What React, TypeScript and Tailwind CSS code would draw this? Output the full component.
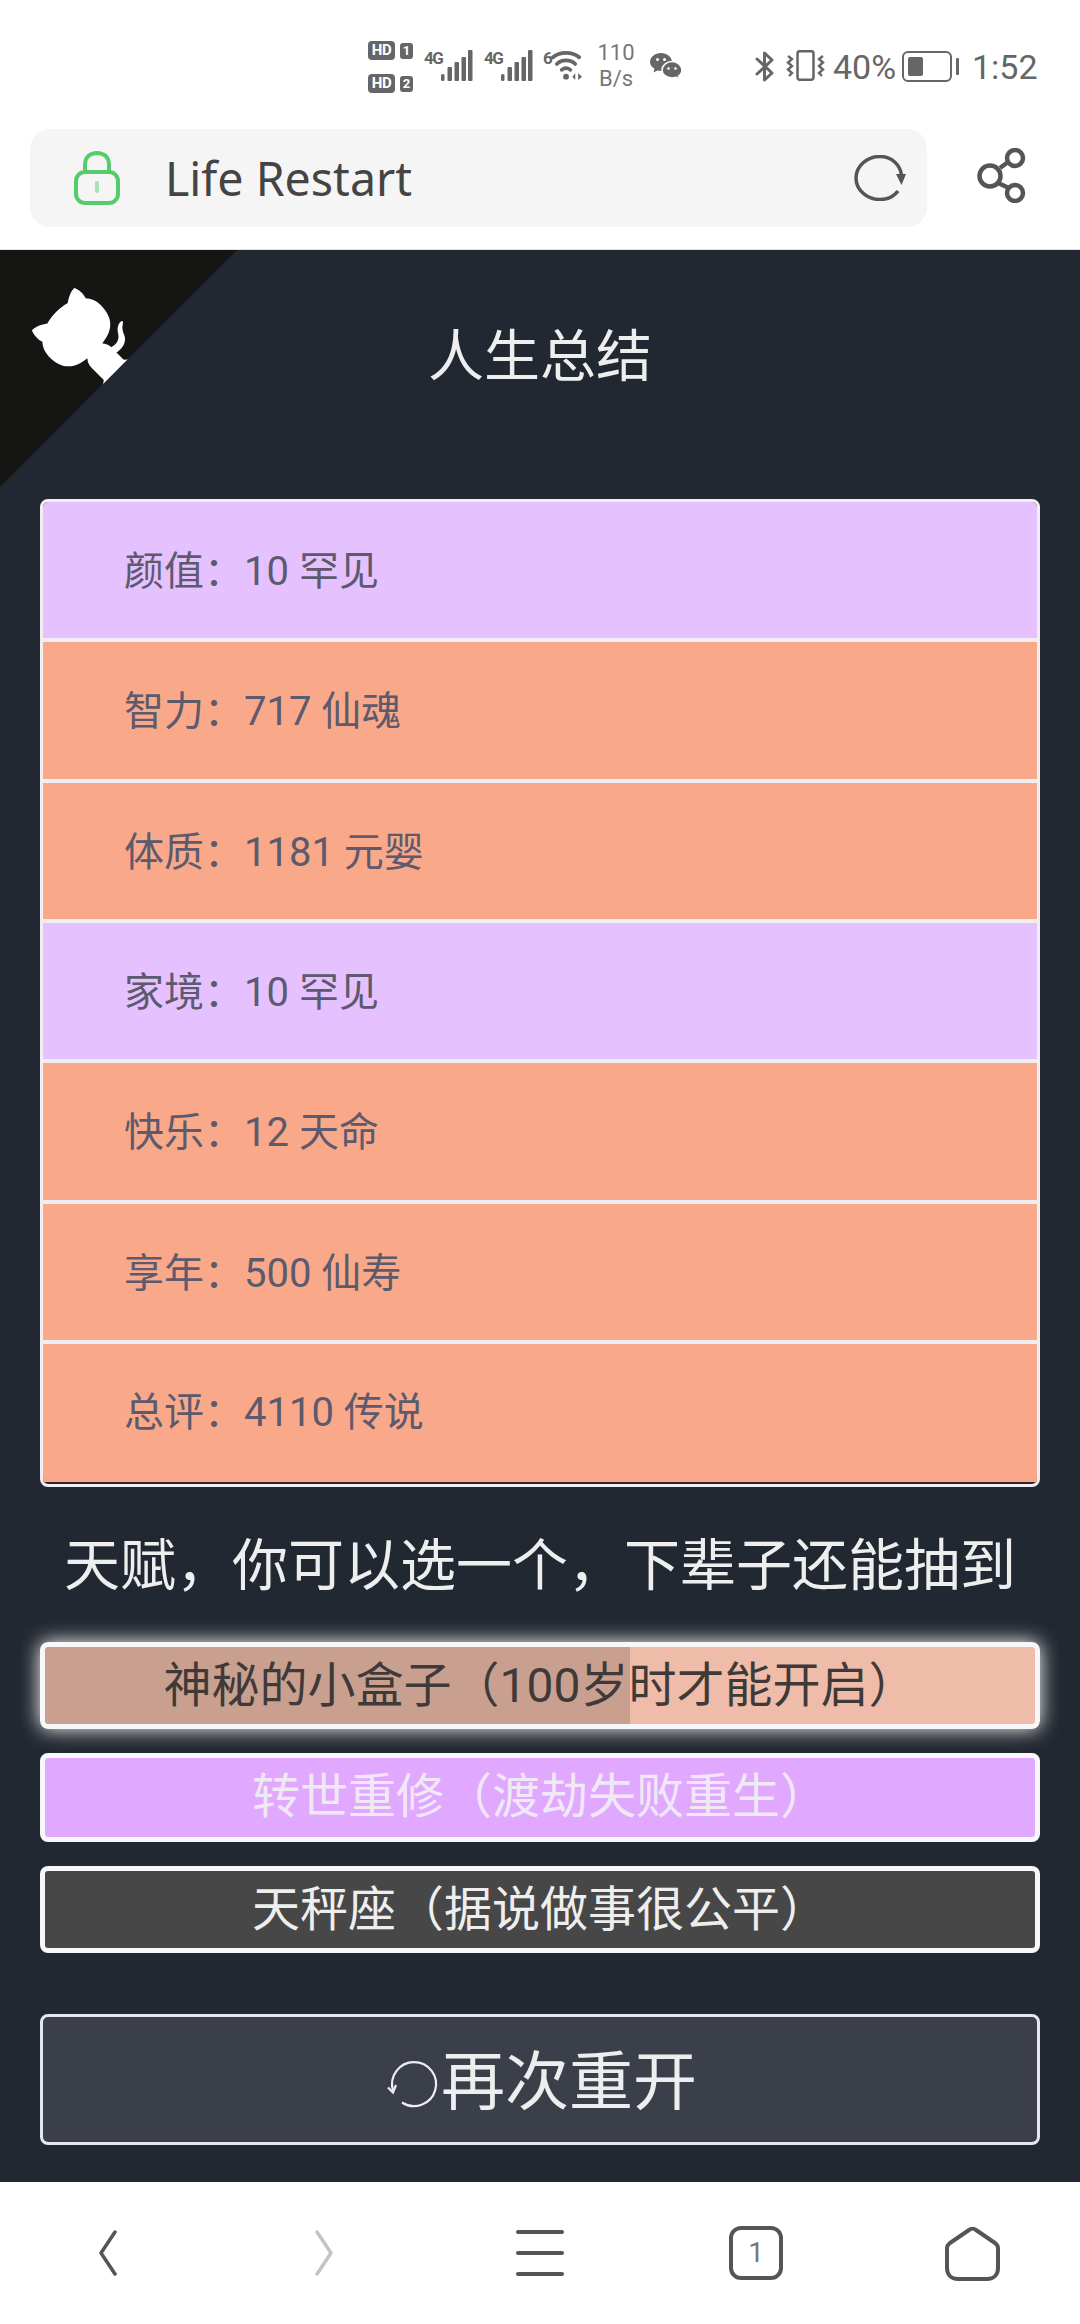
import React from "react";

const cjk = "font-['Roboto','Noto_Sans_CJK_SC',sans-serif]";

function Hd({ n }: { n: string }) {
  return (
    <div className="flex items-center gap-[5px] h-[19px]">
      <span className="w-[27px] h-[19px] rounded-[4px] bg-[#666666] text-white text-[15px] leading-[19px] font-bold text-center tracking-[-0.5px] font-['Roboto',sans-serif]">HD</span>
      <span className="w-[13px] h-[16px] rounded-[3px] bg-[#666666] text-white text-[13px] leading-[16px] font-bold text-center font-['Roboto',sans-serif]">{n}</span>
    </div>
  );
}

function Signal({ label }: { label: string }) {
  return (
    <div className="flex items-start h-[32px] w-[49px]">
      <span className="text-[#666666] text-[17px] leading-[15px] font-bold mt-[1px] w-[17px] tracking-[-1.5px] font-['Roboto',sans-serif]">{label}</span>
      <svg width="32" height="32" viewBox="0 0 32 32" fill="#666666">
        <rect x="0" y="24" width="3.500" height="7" rx="1.500" />
        <rect x="6.500" y="17" width="4.500" height="14" rx="1" />
        <rect x="13.500" y="12" width="4.500" height="19" rx="1" />
        <rect x="20.500" y="7" width="4.500" height="24" rx="1" />
        <rect x="27" y="0" width="4.500" height="31" rx="1" />
      </svg>
    </div>
  );
}

function Wifi() {
  return (
    <div className="flex items-start h-[32px] w-[41px]">
      <span className="text-[#666666] text-[17px] leading-[15px] font-bold mt-[1px] w-[8px] font-['Roboto',sans-serif]">6</span>
      <svg width="34" height="32" viewBox="0 0 34 32" fill="none" stroke="#666666" strokeWidth="3.800" strokeLinecap="round">
        <path d="M2 7 C9 1 22 1 29 7" />
        <path d="M6 14 C11 9 20 9 25 14" />
        <path d="M11 20 C14 17.500 17 17.500 20 20" />
        <circle cx="15.500" cy="27" r="3" fill="#666666" stroke="none" />
        <path d="M25 23.500 L25 30.500 L22 27 Z M28 23.500 L28 30.500 L32 27 Z" fill="#666666" stroke="none" />
      </svg>
    </div>
  );
}

function Wechat() {
  return (
    <svg width="32" height="26" viewBox="0 0 32 26" fill="#666666">
      <path d="M11 0 C17 0 22 4 22 9 C22 14 17 18 11 18 C9.500 18 8.500 17.800 7.500 17.500 L3.500 19.500 L4.500 15.800 C1.700 14 0 11.600 0 9 C0 4 5 0 11 0 Z" />
      <path d="M22 8.500 C27.500 8.500 32 12.500 32 17 C32 19.500 30.600 21.700 28.500 23.100 L29.300 26 L26 24.300 C24.800 24.700 23.400 25 22 25 C16.500 25 12 21.500 12 17 C12 12.500 16.500 8.500 22 8.500 Z" stroke="#ffffff" strokeWidth="1.500" />
      <circle cx="7.500" cy="6.500" r="1.500" fill="#fff" />
      <circle cx="14.500" cy="6.500" r="1.500" fill="#fff" />
      <circle cx="18.500" cy="15.500" r="1.300" fill="#fff" />
      <circle cx="25.500" cy="15.500" r="1.300" fill="#fff" />
    </svg>
  );
}

function Bluetooth() {
  return (
    <svg width="20" height="31" viewBox="0 0 20 31" fill="none" stroke="#666666" strokeWidth="3" strokeLinejoin="round" strokeLinecap="round">
      <path d="M2 8 L17 22 L9.500 29 L9.500 2 L17 9 L2 23" />
    </svg>
  );
}

function Vibrate() {
  return (
    <svg width="40" height="31" viewBox="0 0 40 31" fill="none" stroke="#666666" strokeWidth="2.500">
      <rect x="11.500" y="1.200" width="16" height="28.600" rx="2.500" />
      <path d="M2 6 L6 9 L2 12.500 L6 16 L2 19.500 L6 23 L3 26" strokeWidth="2.400" />
      <path d="M37 6 L33 9 L37 12.500 L33 16 L37 19.500 L33 23 L36 26" strokeWidth="2.400" />
    </svg>
  );
}

function Battery() {
  return (
    <div className="flex items-center">
      <div className="w-[50px] h-[31px] rounded-[6px] border-[2px] border-[#666666] p-[4px]">
        <div className="w-[15px] h-full bg-[#666666] rounded-[2px]" />
      </div>
      <div className="w-[3px] h-[17px] bg-[#666666] ml-[4px] rounded-[1px]" />
    </div>
  );
}

function Row({ text, purple, last }: { text: string; purple?: boolean; last?: boolean }) {
  return (
    <div
      className={`${last ? "h-[138.330px]" : "h-[140.330px] border-b-[4px] border-[#f1edf1] pt-[4px]"} flex items-center pl-[81px] text-[40px] text-[#5c5a6c] ${purple ? "bg-[#e6c1ff]" : "bg-[#f9a98a]"}`}
    >
      {text}
    </div>
  );
}

export default function App() {
  return (
    <div className={`w-[1080px] h-[2324px] bg-white flex flex-col overflow-hidden ${cjk}`}>
      {/* status bar */}
      <div className="h-[129px] flex items-start pt-[41px] pl-[368px] text-[#666666]">
        <div className="flex flex-col gap-[14px] w-[45px]">
          <Hd n="1" />
          <Hd n="2" />
        </div>
        <div className="ml-[11px] mt-[9px]"><Signal label="4G" /></div>
        <div className="ml-[11px] mt-[9px]"><Signal label="4G" /></div>
        <div className="ml-[10px] mt-[9px]"><Wifi /></div>
        <div className="ml-[13px] mt-[-1px] w-[38px] flex flex-col text-[22px] leading-[26px] text-[#777777] font-['Roboto',sans-serif] text-center">
          <span>110</span>
          <span>B/s</span>
        </div>
        <div className="ml-[15px] mt-[12px]"><Wechat /></div>
        <div className="ml-[73px] mt-[10px]"><Bluetooth /></div>
        <div className="ml-[11px] mt-[9px]"><Vibrate /></div>
        <div className="ml-[7px] mt-[5px] w-[63px] text-[34px] leading-[42px] whitespace-nowrap font-['Roboto',sans-serif]">40%</div>
        <div className="ml-[6px] mt-[10px]"><Battery /></div>
        <div className="ml-[13px] mt-[5px] text-[34px] leading-[42px] font-['Roboto',sans-serif]">1:52</div>
      </div>

      {/* address bar */}
      <div className="h-[121px] flex items-start pl-[30px] border-b border-[#e4e4e4]">
        <div className="w-[897px] h-[98px] rounded-[20px] bg-[#f5f5f5] flex items-center pl-[44px] pr-[21px]">
          <svg width="46" height="54" viewBox="0 0 46 54" fill="none" stroke="#55cc6c" strokeWidth="4">
            <path d="M11 22 V14 C11 6 16 2 23 2 C30 2 35 6 35 14 V22" />
            <rect x="2" y="21" width="42" height="31" rx="9" />
            <path d="M23 32 V40" strokeWidth="4" strokeLinecap="round" stroke="#a5e3b2" />
          </svg>
          <span className="ml-[45px] text-[46.500px] leading-none text-[#444444] font-['Noto_Sans',sans-serif] flex-1">Life Restart</span>
          <svg width="52" height="46" viewBox="0 0 52 46" fill="none" stroke="#555555" strokeWidth="3.500">
            <path d="M44 36 C40 41.500 33 44.500 26 44.500 C13 44.500 2 35 2 23 C2 11 13 1.500 26 1.500 C38 1.500 46 10 47.500 20" />
            <path d="M42 19 L52 19 L47.500 30 Z" fill="#555555" stroke="none" />
          </svg>
        </div>
        <svg className="ml-[50px] mt-[19px]" width="50" height="55" viewBox="0 0 50 55" fill="none" stroke="#555555" strokeWidth="4.500">
          <circle cx="13" cy="28" r="10.500" />
          <circle cx="38" cy="10" r="8" />
          <circle cx="38" cy="45" r="8" />
          <path d="M23 20 L31 14 M21 35 L32 40" />
        </svg>
      </div>

      {/* page */}
      <div className="relative h-[1932px] bg-[#222831] text-[#eeeeee] px-10">
        <svg className="absolute top-0 left-0" width="237" height="237" viewBox="0 0 250 250">
          <g transform="translate(250,0) scale(-1,1)">
            <path fill="#151513" d="M0,0 L115,115 L130,115 L142,142 L250,250 L250,0 Z" />
            <path fill="#ffffff" d="M128.3,109.0 C113.8,99.7 119.0,89.6 119.0,89.6 C122.0,82.7 120.5,78.6 120.5,78.6 C119.2,72.0 123.4,76.3 123.4,76.3 C127.3,80.9 125.5,87.3 125.5,87.3 C122.9,97.6 130.6,101.9 134.4,103.2" />
            <path fill="#ffffff" d="M115.0,115.0 C114.9,115.1 118.7,116.5 119.8,115.4 L133.7,101.6 C136.9,99.2 139.9,98.4 142.2,98.6 C133.8,88.0 127.5,74.4 143.8,58.0 C148.5,53.4 154.0,51.2 159.7,51.0 C160.3,49.4 163.2,43.6 171.4,40.1 C171.4,40.1 176.1,42.5 178.8,56.2 C183.1,58.6 187.2,61.8 190.9,65.4 C194.5,69.0 197.7,73.2 200.1,77.6 C213.8,80.2 216.3,84.9 216.3,84.9 C212.7,93.1 206.9,96.0 205.4,96.6 C205.1,102.4 203.0,107.8 198.3,112.5 C181.9,128.9 168.3,122.5 157.7,114.1 C157.9,116.9 156.7,120.9 152.7,124.9 L141.0,136.5 C139.8,137.7 141.6,141.9 141.8,141.8 Z" />
          </g>
        </svg>

        <h1 className="mt-[67px] mb-[102px] h-[80px] leading-[80px] text-[56px] font-normal text-center">人生总结</h1>

        <div className="h-[988px] border-[3px] border-[#f1edf1] rounded-[8px] bg-[#2a2530] overflow-hidden">
          <Row text="颜值：10 罕见" purple />
          <Row text="智力：717 仙魂" />
          <Row text="体质：1181 元婴" />
          <Row text="家境：10 罕见" purple />
          <Row text="快乐：12 天命" />
          <Row text="享年：500 仙寿" />
          <Row text="总评：4110 传说" last />
        </div>

        <div className="mt-[39px] mb-[36px] h-[80px] leading-[80px] text-[56px] text-center whitespace-nowrap">天赋，你可以选一个，下辈子还能抽到</div>

        <div className="h-[87px] mb-[24px] border-[5px] border-[#f7f7f9] rounded-[8px] shadow-[0_0_20px_#ffffff] bg-[linear-gradient(to_right,#c9a08f_585px,#f0bcaa_585px)] text-[#3f3a38] text-[48px] leading-[77px] text-center whitespace-nowrap">神秘的小盒子（100岁时才能开启）</div>
        <div className="h-[89px] mb-[24px] border-[5px] border-[#f7f7f9] rounded-[8px] bg-[#e0a8ff] text-[#f1e8f6] text-[48px] leading-[77px] text-center whitespace-nowrap">转世重修（渡劫失败重生）</div>
        <div className="h-[87px] mb-[61px] border-[5px] border-[#f7f7f9] rounded-[8px] bg-[#474747] text-[#eeeeee] text-[48px] leading-[77px] text-center whitespace-nowrap">天秤座（据说做事很公平）</div>

        <div className="h-[131px] border-[3px] border-[#e5e7eb] rounded-[8px] bg-[#3a3f49] flex items-center justify-center pl-[4px] pt-[6px] text-[64px]">
          <svg width="54" height="52" viewBox="0 0 54 52" fill="none" stroke="#eeeeee" strokeWidth="2.200" className="mt-[7px]">
            <path d="M15 42.500 A22 22 0 1 0 6 30.500" />
            <path d="M1 27.500 L6 32.500 L9 25" />
          </svg>
          <span>再次重开</span>
        </div>
      </div>

      {/* bottom nav */}
      <div className="flex-1 grid grid-cols-5 items-center bg-white">
        <div className="flex justify-center">
          <svg width="20" height="46" viewBox="0 0 20 46" fill="none" stroke="#555555" strokeWidth="3.500" strokeLinecap="round" strokeLinejoin="round">
            <path d="M17 2 L3 23 L17 44" />
          </svg>
        </div>
        <div className="flex justify-center">
          <svg width="20" height="46" viewBox="0 0 20 46" fill="none" stroke="#c4c4c4" strokeWidth="3.500" strokeLinecap="round" strokeLinejoin="round">
            <path d="M3 2 L17 23 L3 44" />
          </svg>
        </div>
        <div className="flex justify-center">
          <div className="w-[48px] flex flex-col gap-[17px]">
            <div className="h-[4px] rounded-full bg-[#555555]" />
            <div className="h-[4px] rounded-full bg-[#555555]" />
            <div className="h-[4px] rounded-full bg-[#555555]" />
          </div>
        </div>
        <div className="flex justify-center">
          <div className="w-[54px] h-[54px] border-[4px] border-[#555555] rounded-[12px] flex items-center justify-center text-[#777777] text-[28px] leading-none font-['Roboto',sans-serif]">1</div>
        </div>
        <div className="flex justify-center">
          <svg width="55" height="55" viewBox="0 0 55 55" fill="none" stroke="#555555" strokeWidth="4" strokeLinejoin="round">
            <path d="M24 4 C26 2.200 29 2.200 31 4 L50 17 C52 18.500 53 20 53 22 V42 C53 48.500 49 53 42 53 H13 C6 53 2 48.500 2 42 V22 C2 20 3 18.500 5 17 Z" />
          </svg>
        </div>
      </div>
    </div>
  );
}
